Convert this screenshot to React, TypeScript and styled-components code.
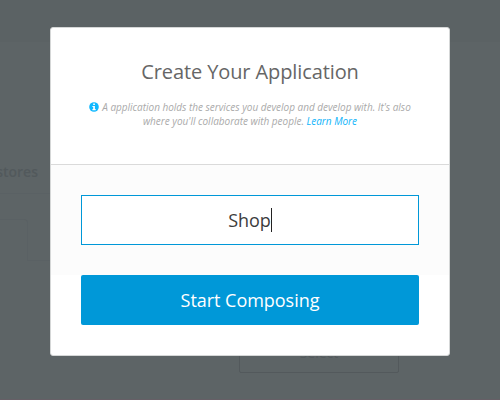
import React from "react";
import styled, { createGlobalStyle } from "styled-components";

const GlobalStyle = createGlobalStyle`
  * { box-sizing: border-box; }
  body {
    margin: 0;
    font-family: "Open Sans", "Noto Sans", sans-serif;
  }
`;

const Page = styled.div`
  width: 500px;
  height: 400px;
  overflow: hidden;
  position: relative;
  display: flex;
  flex-direction: column;
  background: #5d6466;
  border-bottom: 1px solid #665f66;
`;

const TopBand = styled.div`
  flex: 0 0 42px;
  background: #5b6264;
`;

const SectionHeading = styled.div`
  display: flex;
  justify-content: flex-end;
  width: 50px;
  height: 152px;
  padding: 119px 12px 0 0;
  border-bottom: 1px solid #5a6164;
  font-size: 14px;
  line-height: 22px;
  font-weight: 600;
  color: #52595c;
  white-space: nowrap;
`;

const TabLine = styled.div`
  display: flex;
  height: 67px;
  padding-top: 25px;
`;

const Tab = styled.div`
  width: 28px;
  height: 42px;
  border: 1px solid #5a6164;
  border-width: 1px 1px 0 0;
  border-top-right-radius: 4px;
`;

const TabRule = styled.div`
  flex: 0 0 22px;
  border-bottom: 1px solid #5a6164;
`;

const SelectButton = styled.div`
  width: 160px;
  height: 38px;
  margin: 74px 0 0 239px;
  border: 1px solid #53595c;
  border-radius: 2px;
  color: #53595c;
  font-size: 14px;
  line-height: 34px;
  text-align: center;
`;

const Overlay = styled.div`
  position: absolute;
  inset: 0;
  padding: 27px 50px;
`;

const Dialog = styled.div`
  width: 400px;
  height: 329px;
  background: #fff;
  border: 1px solid #d5d7d7;
  border-radius: 3px;
  overflow: hidden;
`;

const Header = styled.div`
  height: 137px;
  padding: 30px 30px 0;
  text-align: center;
  border-bottom: 1px solid #dadada;
`;

const Title = styled.h1`
  margin: 0;
  font-size: 20px;
  line-height: 28px;
  font-weight: 400;
  letter-spacing: -0.1px;
  color: #666;
`;

const Description = styled.p`
  margin: 14px 0 0;
  font-size: 10px;
  line-height: 14px;
  font-style: italic;
  letter-spacing: -0.015px;
  color: #aaa;
`;

const InfoIcon = styled.svg`
  width: 10px;
  height: 10px;
  margin-right: 3px;
  vertical-align: -1px;
`;

const Learn = styled.a`
  color: #10b4fa;
  text-decoration: none;
`;

const Field = styled.div`
  height: 110px;
  padding: 30px 30px 0;
  background: #fcfcfc;
`;

const Input = styled.div`
  height: 50px;
  display: flex;
  justify-content: center;
  align-items: center;
  background: #fff;
  border: 1px solid #0098d8;
  font-size: 18px;
  letter-spacing: -0.1px;
  color: #3c3c3c;
`;

const Caret = styled.span`
  width: 1px;
  height: 24px;
  background: #222;
`;

const Actions = styled.div`
  padding: 0 30px;
`;

const Submit = styled.button`
  display: block;
  width: 100%;
  height: 50px;
  padding: 0;
  border: 0;
  border-radius: 2px;
  background: #0098d8;
  color: #fff;
  font: 400 18px/50px "Open Sans", "Noto Sans", sans-serif;
  letter-spacing: -0.03px;
`;

export default function App() {
  return (
    <>
      <GlobalStyle />
      <Page>
        <TopBand />
        <SectionHeading>stores</SectionHeading>
        <TabLine>
          <Tab />
          <TabRule />
        </TabLine>
        <SelectButton>Select</SelectButton>
        <Overlay>
          <Dialog>
            <Header>
              <Title>Create Your Application</Title>
              <Description>
                <InfoIcon viewBox="0 0 10 10">
                  <circle cx="5" cy="5" r="4.8" fill="#10b8ff" />
                  <path d="M4.2 1.5h1.7v1.4H4.2zM3.4 4h2.5v3h.8v1.2H3.4V7h.8V5.1h-.8z" fill="#fff" />
                </InfoIcon>
                A application holds the services you develop and develop with. It's also
                <br />
                where you'll collaborate with people. <Learn>Learn More</Learn>
              </Description>
            </Header>
            <Field>
              <Input>
                Shop
                <Caret />
              </Input>
            </Field>
            <Actions>
              <Submit>Start Composing</Submit>
            </Actions>
          </Dialog>
        </Overlay>
      </Page>
    </>
  );
}
